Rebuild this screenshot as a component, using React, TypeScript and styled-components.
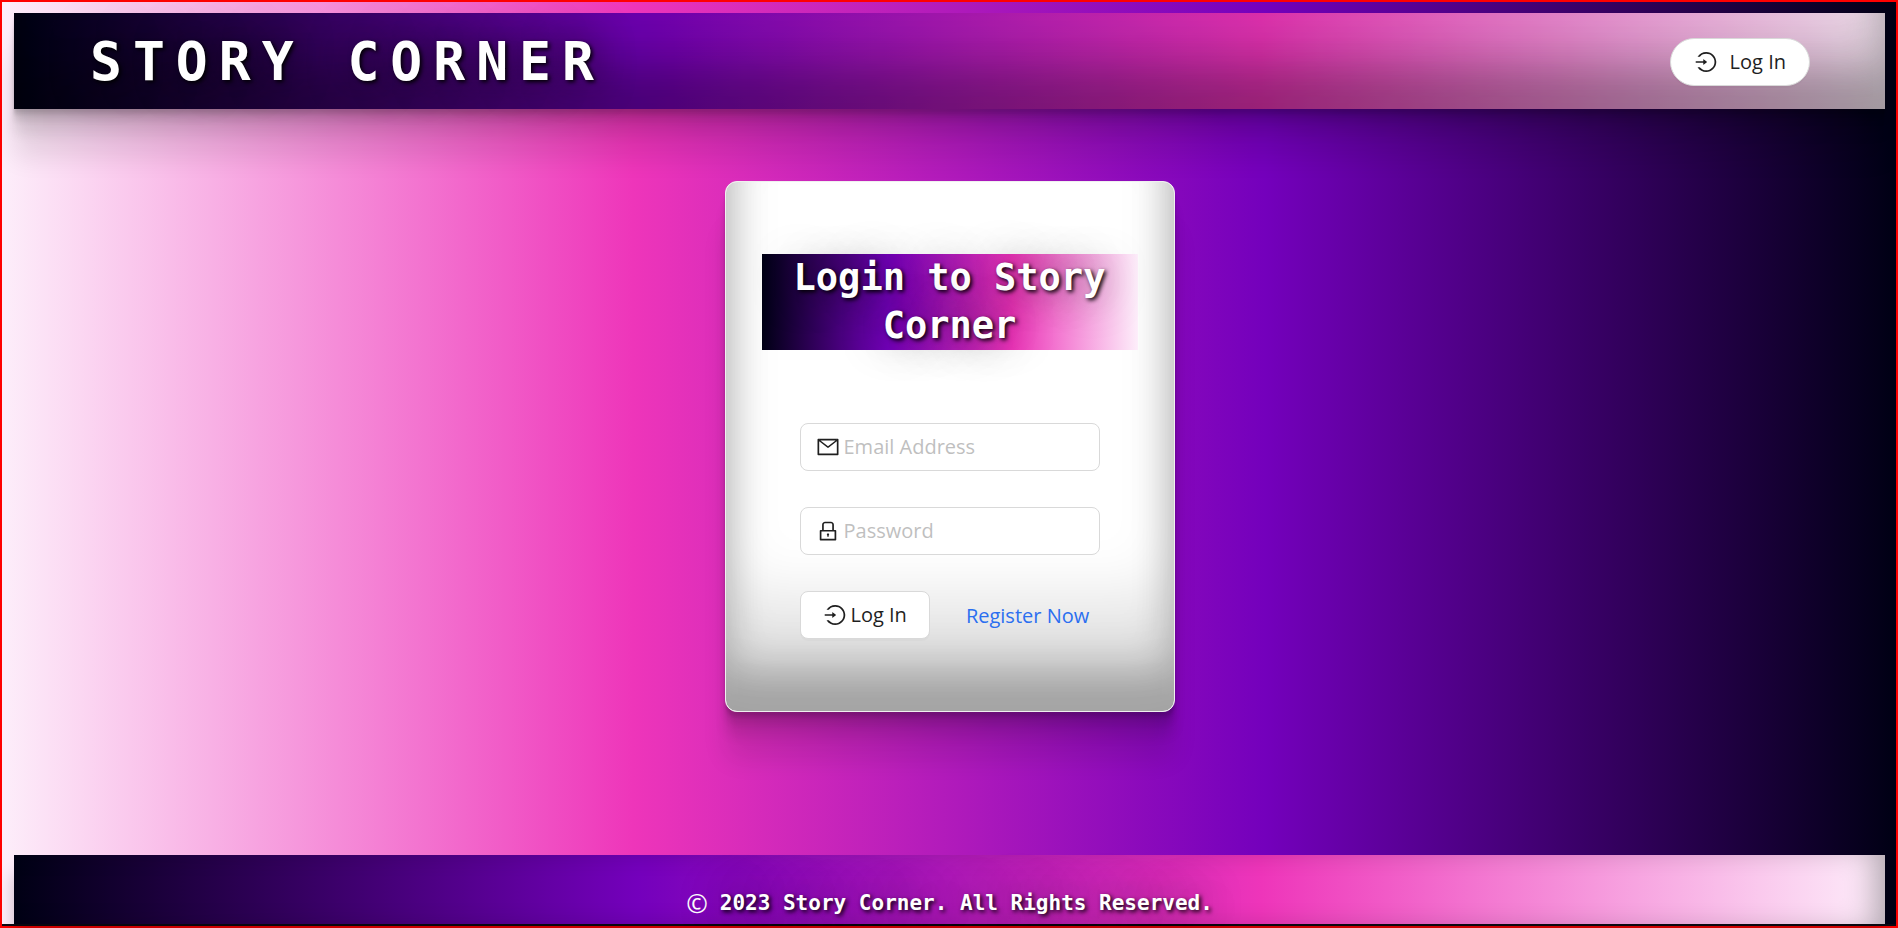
import React from "react";
import styled, { createGlobalStyle, css } from "styled-components";
import { AiOutlineLock, AiOutlineLogin, AiOutlineMail } from "react-icons/ai";

const sans = `"Open Sans", "Noto Sans", sans-serif`;
const mono = `"DejaVu Sans Mono", "Liberation Mono", monospace`;
const stops = "#000014, #7400bc 33.33%, #ee35ba 66.67%, #fdeefa";

const GlobalStyle = createGlobalStyle`
  *, *::before, *::after { box-sizing: border-box; }
  body { margin: 0; font-family: ${sans}; font-size: 20px; color: #1f1f1f; }
`;

const raised = css`
  box-shadow:
    rgba(0, 0, 0, 0.17) 0px -34px 38px 0px inset,
    rgba(0, 0, 0, 0.15) 0px -54px 45px 0px inset,
    rgba(0, 0, 0, 0.1) 0px -118px 60px 0px inset,
    rgba(0, 0, 0, 0.06) 0px 3px 2px,
    rgba(0, 0, 0, 0.09) 0px 6px 3px,
    rgba(0, 0, 0, 0.09) 0px 12px 6px,
    rgba(0, 0, 0, 0.09) 0px 24px 12px,
    rgba(0, 0, 0, 0.09) 0px 48px 24px;
`;

const glow = css`
  color: #fff;
  text-shadow: 2px 2px 4px #000, 0 0 40px rgba(0, 0, 0, 0.7);
`;

const Frame = styled.div`
  min-height: 100vh;
  display: flex;
  border: 2px solid #f00;
`;

const Page = styled.div`
  flex: 1;
  display: flex;
  flex-direction: column;
  padding: 11px 11px 0 12px;
  border-bottom: 2px solid #0a0a14;
  background: linear-gradient(to left, ${stops});
`;

const Header = styled.header`
  ${raised}
  display: flex;
  align-items: center;
  justify-content: space-between;
  padding: 2px 75px 0 76px;
  background: linear-gradient(to right, ${stops});
`;

const Brand = styled.h1`
  ${glow}
  margin: 0;
  font: bold 53px/94px ${mono};
  letter-spacing: 11px;
  text-transform: uppercase;
`;

const Button = styled.button<{ $pill?: boolean }>`
  display: flex;
  align-items: center;
  gap: ${(p) => (p.$pill ? 12 : 4)}px;
  height: 48px;
  padding: 0 ${(p) => (p.$pill ? 23 : 22)}px;
  border: 1px solid #d9d9d9;
  border-radius: ${(p) => (p.$pill ? 24 : 8)}px;
  background: #fff;
  color: #1f1f1f;
  font: 20px/32px ${sans};
  box-shadow: 0 2px 0 rgba(0, 0, 0, 0.02);
  cursor: pointer;
`;

const Main = styled.main`
  flex: 1;
  display: flex;
  justify-content: center;
  align-items: flex-start;
  padding: 72px 0;
`;

const Card = styled.section`
  ${raised}
  width: 450px;
  padding: 72px 36px;
  border: 1px solid #f0f0f0;
  border-radius: 12px;
  background: #fff;
`;

const CardTitle = styled.h2`
  ${glow}
  margin: 0 0 73px;
  font: bold 37px/48px ${mono};
  text-align: center;
  background: linear-gradient(to right, ${stops});
`;

const Form = styled.form`
  display: flex;
  flex-direction: column;
  gap: 36px;
  padding: 0 38px;
`;

const Field = styled.label`
  display: flex;
  align-items: center;
  gap: 4px;
  height: 48px;
  padding: 0 15px;
  border: 1px solid #d9d9d9;
  border-radius: 8px;
  background: #fff;
`;

const Input = styled.input`
  flex: 1;
  min-width: 0;
  padding: 0;
  border: 0;
  outline: 0;
  background: transparent;
  color: #1f1f1f;
  font: 20px/32px ${sans};
  &::placeholder { color: #bfbfbf; opacity: 1; }
`;

const Actions = styled.div`
  display: flex;
  align-items: center;
  gap: 36px;
`;

const Link = styled.a`
  color: #2b6ff0;
  text-decoration: none;
  white-space: nowrap;
`;

const Footer = styled.footer`
  ${glow}
  display: flex;
  align-items: center;
  justify-content: center;
  gap: 12px;
  padding: 32px 0 5px;
  font: bold 21px/32px ${mono};
  background: linear-gradient(to right, ${stops});
  box-shadow: inset -20px 0 30px -10px rgba(0, 0, 0, 0.3), 0 20px 16px rgba(0, 0, 0, 0.2);
`;

const Copyright = styled.span`
  font: 26px/32px ${sans};
  text-shadow: none;
`;

export default function App() {
  return (
    <Frame>
      <GlobalStyle />
      <Page>
        <Header>
          <Brand>Story Corner</Brand>
          <Button type="button" $pill>
            <AiOutlineLogin size={24} aria-hidden />
            Log In
          </Button>
        </Header>
        <Main>
          <Card>
            <CardTitle>Login to Story Corner</CardTitle>
            <Form onSubmit={(e) => e.preventDefault()}>
              <Field>
                <AiOutlineMail size={24} aria-hidden />
                <Input type="email" placeholder="Email Address" aria-label="Email Address" />
              </Field>
              <Field>
                <AiOutlineLock size={24} aria-hidden />
                <Input type="password" placeholder="Password" aria-label="Password" />
              </Field>
              <Actions>
                <Button type="submit">
                  <AiOutlineLogin size={24} aria-hidden />
                  Log In
                </Button>
                <Link href="#register">Register Now</Link>
              </Actions>
            </Form>
          </Card>
        </Main>
        <Footer>
          <Copyright>©</Copyright>
          <span>2023 Story Corner. All Rights Reserved.</span>
        </Footer>
      </Page>
    </Frame>
  );
}
